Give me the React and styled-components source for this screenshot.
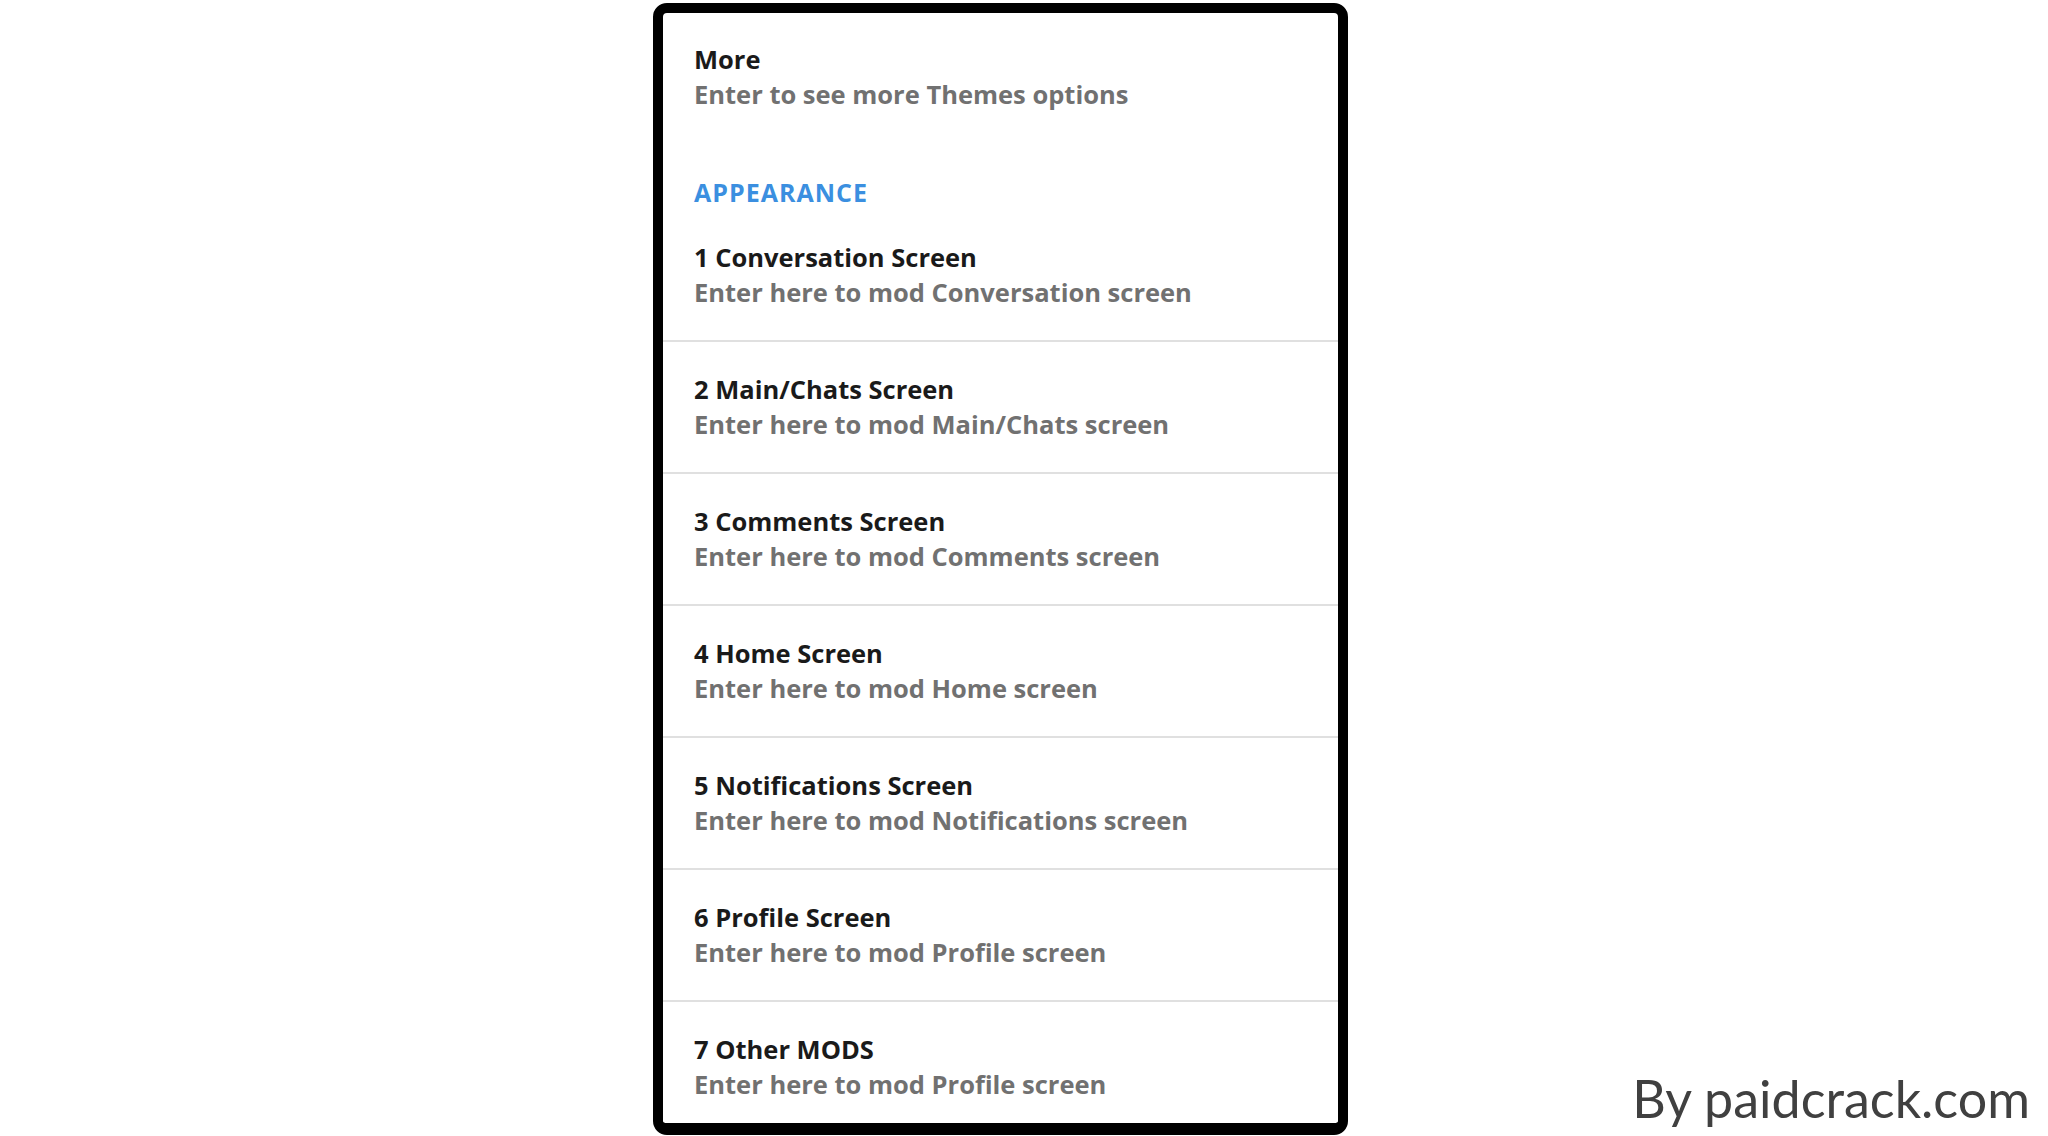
import React from "react";
import styled, { createGlobalStyle } from "styled-components";

const GlobalStyle = createGlobalStyle`
  html, body {
    margin: 0;
    padding: 0;
    background: #ffffff;
  }
  * {
    box-sizing: border-box;
  }
`;

const items = [
  { title: "1 Conversation Screen", desc: "Enter here to mod Conversation screen" },
  { title: "2 Main/Chats Screen", desc: "Enter here to mod Main/Chats screen" },
  { title: "3 Comments Screen", desc: "Enter here to mod Comments screen" },
  { title: "4 Home Screen", desc: "Enter here to mod Home screen" },
  { title: "5 Notifications Screen", desc: "Enter here to mod Notifications screen" },
  { title: "6 Profile Screen", desc: "Enter here to mod Profile screen" },
  { title: "7 Other MODS", desc: "Enter here to mod Profile screen" },
];

export default function App() {
  return (
    <>
      <GlobalStyle />
      <Page>
        <Phone>
          <TopItem>
            <Title>More</Title>
            <Desc>Enter to see more Themes options</Desc>
          </TopItem>
          <Category>APPEARANCE</Category>
          <List>
            {items.map((item, i) => (
              <Row key={item.title} $first={i === 0}>
                <Title>{item.title}</Title>
                <Desc>{item.desc}</Desc>
              </Row>
            ))}
          </List>
        </Phone>
        <Watermark>By paidcrack.com</Watermark>
      </Page>
    </>
  );
}

const Page = styled.div`
  height: 1136px;
  width: 2048px;
  display: flex;
  align-items: flex-start;
  padding-left: 653px;
  padding-top: 3px;
  overflow: hidden;
`;

const Phone = styled.div`
  width: 695px;
  height: 1132px;
  border: 10px solid #000;
  border-bottom-width: 12px;
  border-radius: 14px;
  background: #fff;
  display: flex;
  flex-direction: column;
  overflow: hidden;
  font-family: "Open Sans", "Noto Sans", sans-serif;
`;

const TopItem = styled.div`
  padding: 29px 0 0 31px;
`;

const Title = styled.div`
  font-size: 25.5px;
  font-weight: 700;
  line-height: 35px;
  color: #1a1a1a;
  letter-spacing: 0;
`;

const Desc = styled.div`
  font-size: 25.5px;
  font-weight: 700;
  line-height: 35px;
  color: #717171;
  letter-spacing: 0;
`;

const Category = styled.div`
  padding: 63px 0 0 31px;
  font-size: 25px;
  font-weight: 700;
  line-height: 34px;
  color: #3b8fe0;
  letter-spacing: 1px;
`;

const List = styled.div`
  display: flex;
  flex-direction: column;
`;

const Row = styled.div`
  height: ${(p) => (p.$first ? "131px" : "132px")};
  padding: ${(p) => (p.$first ? "31px" : "30px")} 0 0 31px;
  border-top: ${(p) => (p.$first ? "none" : "2px solid #e0e0e0")};
`;

const Watermark = styled.div`
  margin-left: auto;
  align-self: flex-end;
  margin-right: 18px;
  margin-bottom: 8px;
  font-family: Lato, "Open Sans", sans-serif;
  font-size: 52px;
  line-height: 60px;
  color: #404040;
`;
